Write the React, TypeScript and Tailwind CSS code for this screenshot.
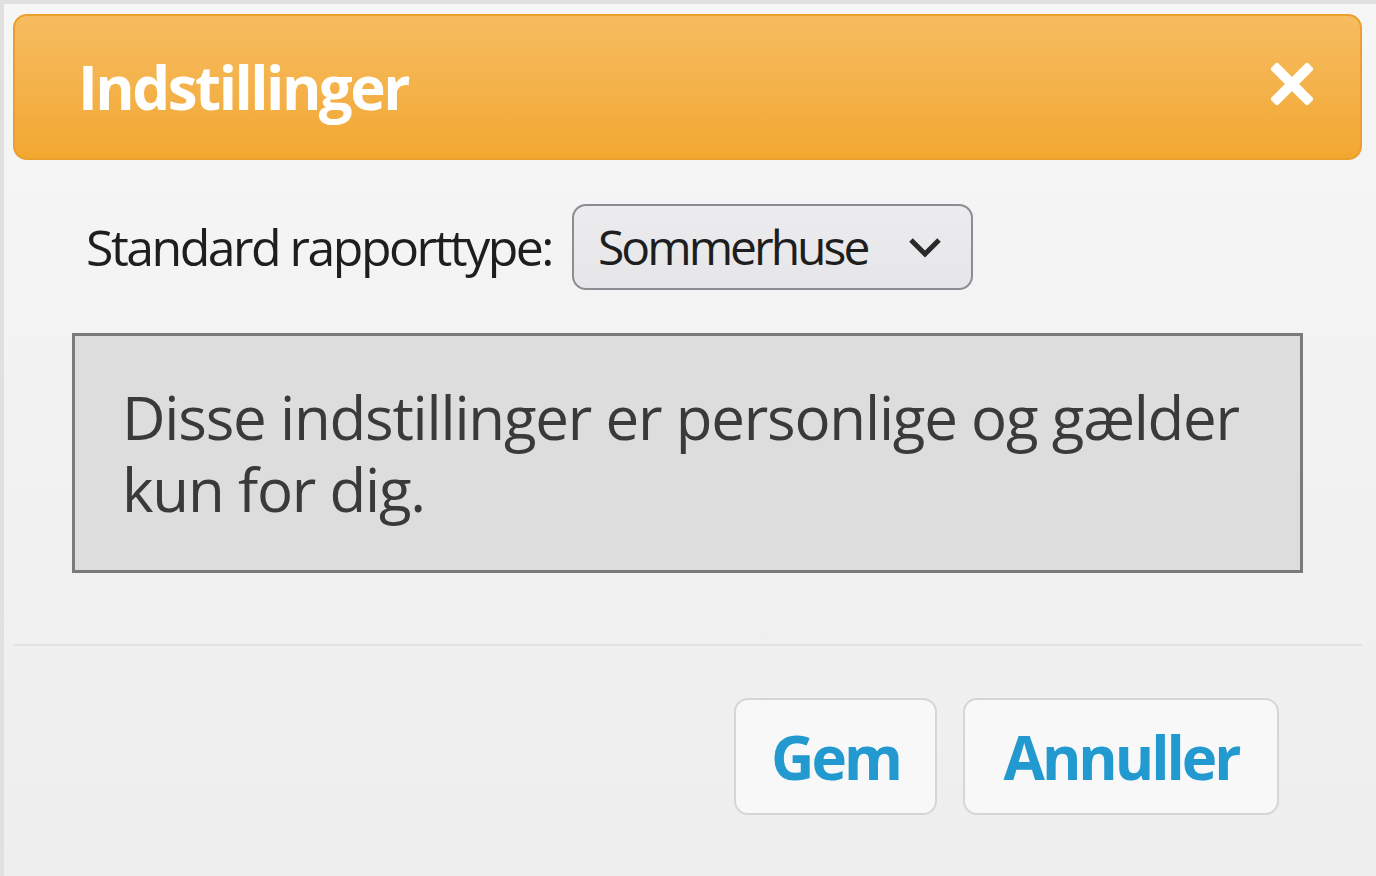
import React from "react";

export default function App() {
  const font = { fontFamily: '"Open Sans", "DejaVu Sans", sans-serif' };
  return (
    <div
      className="w-[1376px] h-[876px] overflow-hidden border-t-[4px] border-l-[4px] border-[#e0e0e0] bg-gradient-to-b from-[#f6f6f6] to-[#eeeeee] flex flex-col"
      style={font}
    >
      {/* Header */}
      <div className="ml-[9px] mt-[10px] w-[1349px] h-[146px] shrink-0 rounded-[14px] border-2 border-[#eb9f2e] bg-gradient-to-b from-[#f6bc5e] via-[#f4b24a] to-[#f2a72f] flex items-center justify-between pl-[63px] pr-[47px]">
        <span className="text-[60px] font-bold text-white leading-none tracking-[-2.5px] whitespace-nowrap">Indstillinger</span>
        <svg width="42" height="42" viewBox="0 0 42 42" className="mt-[-6px]">
          <path d="M6 6 L36 36 M36 6 L6 36" stroke="white" strokeWidth="10" strokeLinecap="square" />
        </svg>
      </div>

      {/* Select row */}
      <div className="mt-[44px] pl-[82px] flex items-center shrink-0">
        <span className="text-[50px] text-[#1e1e1e] leading-none tracking-[-2.5px] w-[486px] whitespace-nowrap">Standard rapporttype:</span>
        <div className="w-[401px] h-[86px] rounded-[14px] border-2 border-[#8c8c92] bg-gradient-to-b from-[#ececee] to-[#e6e6e8] flex items-center justify-between pl-[24px] pr-[28px]">
          <span className="text-[48px] text-[#1e1e1e] leading-none tracking-[-3px] whitespace-nowrap">Sommerhuse</span>
          <svg width="36" height="26" viewBox="0 0 36 26">
            <path d="M4 6 L18 20 L32 6" stroke="#2a2a2a" strokeWidth="5" fill="none" />
          </svg>
        </div>
      </div>

      {/* Info box */}
      <div className="mt-[43px] ml-[68px] w-[1231px] h-[240px] shrink-0 border-[3px] border-[#7a7a7a] bg-[#dddddd] pl-[47px] pt-[45px]">
        <p className="text-[60px] leading-[72px] text-[#3a3a3a] tracking-[-1.2px] whitespace-nowrap">
          Disse indstillinger er personlige og gælder
          <br />
          kun for dig.
        </p>
      </div>

      {/* Divider */}
      <div className="mt-[71px] ml-[9px] w-[1349px] h-[2px] shrink-0 bg-[#e2e2e2]" />

      {/* Buttons */}
      <div className="mt-[52px] flex justify-end gap-[26px] pr-[97px] shrink-0">
        <button className="w-[203px] h-[117px] rounded-[14px] border-2 border-[#d6d6d6] bg-[#f8f8f9] text-[60px] font-bold text-[#2299cf] leading-none tracking-[-3px]" style={font}>
          Gem
        </button>
        <button className="w-[316px] h-[117px] rounded-[14px] border-2 border-[#d6d6d6] bg-[#f8f8f9] text-[60px] font-bold text-[#2299cf] leading-none tracking-[-3px]" style={font}>
          Annuller
        </button>
      </div>
    </div>
  );
}
